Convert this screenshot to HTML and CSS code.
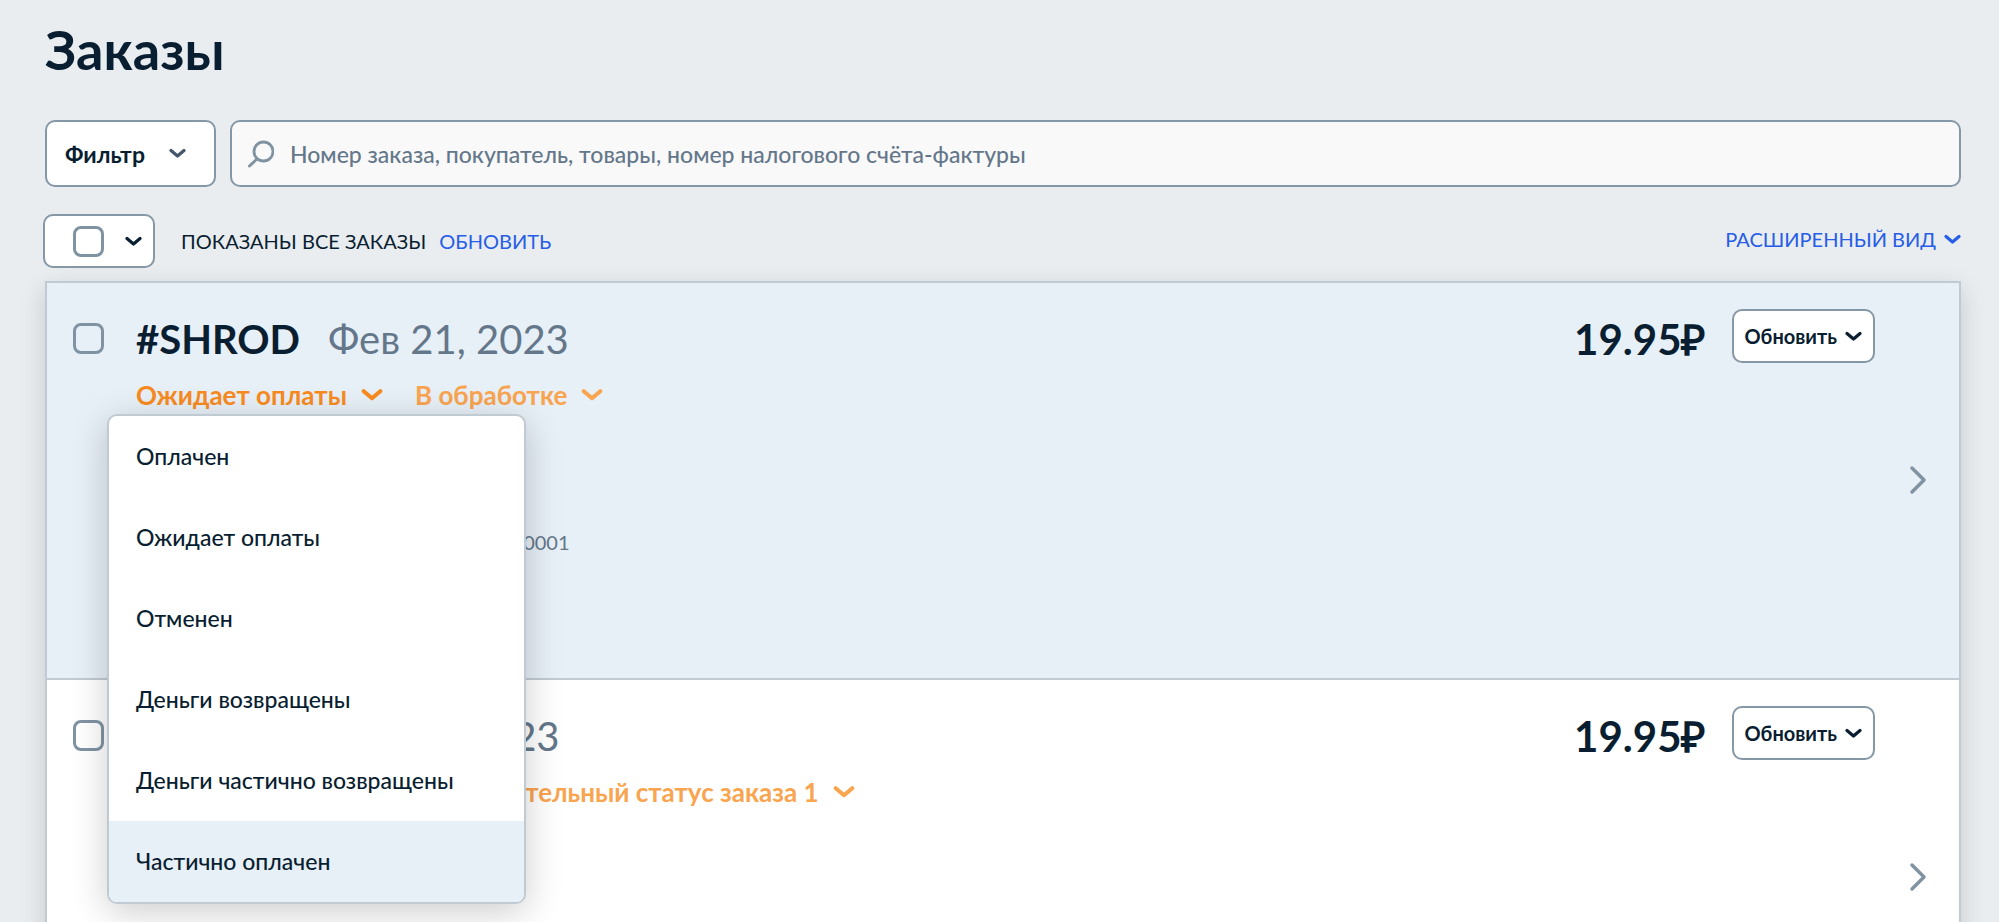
FILE: index.html
```html
<!DOCTYPE html>
<html lang="ru">
<head>
    <meta charset="UTF-8">
    <meta name="viewport" content="width=device-width, initial-scale=1.0">
    <title>Заказы</title>
    <link rel="stylesheet" href="styles.css">
</head>
<body>
    <svg class="sprite" aria-hidden="true">
        <symbol id="chevron" viewBox="0 0 17 11">
            <path d="M2 2.500l6.500 5.500L15 2.500" fill="none" stroke="currentColor" stroke-width="3.200" stroke-linecap="round" stroke-linejoin="round"/>
        </symbol>
        <symbol id="arrow" viewBox="0 0 18 30">
            <path d="M3 3l12 12L3 27" fill="none" stroke="currentColor" stroke-width="3.500" stroke-linecap="round" stroke-linejoin="round"/>
        </symbol>
    </svg>

    <main class="page">
        <h1 class="title">Заказы</h1>

        <form class="search">
            <button type="button" class="btn filter">Фильтр <svg class="chevron"><use href="#chevron"/></svg></button>
            <label class="search-box">
                <svg class="loupe" viewBox="0 0 26 28" aria-hidden="true">
                    <circle cx="15.500" cy="11.500" r="9.500" fill="none" stroke="currentColor" stroke-width="2.800"/>
                    <path d="M9 19l-7.500 7" fill="none" stroke="currentColor" stroke-width="3" stroke-linecap="round"/>
                </svg>
                <input type="text" class="search-input" aria-label="Поиск" placeholder="Номер заказа, покупатель, товары, номер налогового счёта-фактуры">
            </label>
        </form>

        <div class="toolbar">
            <div class="select-all">
                <input type="checkbox" class="check" aria-label="Выбрать все">
                <button type="button" class="link" aria-label="Выбор заказов"><svg class="chevron"><use href="#chevron"/></svg></button>
            </div>
            <span class="shown">Показаны все заказы</span>
            <a class="refresh" href="#">Обновить</a>
            <button type="button" class="link view">Расширенный вид <svg class="chevron"><use href="#chevron"/></svg></button>
        </div>

        <section class="orders">
            <article class="order active">
                <input type="checkbox" class="check" aria-label="Выбрать заказ">
                <div class="info">
                    <div class="heading">
                        <h2 class="number">#SHROD</h2>
                        <span class="date">Фев 21, 2023</span>
                    </div>
                    <div class="statuses">
                        <div class="dropdown">
                            <button type="button" class="status current">Ожидает оплаты <svg class="chevron"><use href="#chevron"/></svg></button>
                            <ul class="menu">
                                <li><button type="button" class="menu-item">Оплачен</button></li>
                                <li><button type="button" class="menu-item">Ожидает оплаты</button></li>
                                <li><button type="button" class="menu-item">Отменен</button></li>
                                <li><button type="button" class="menu-item">Деньги возвращены</button></li>
                                <li><button type="button" class="menu-item">Деньги частично возвращены</button></li>
                                <li><button type="button" class="menu-item hover">Частично оплачен</button></li>
                            </ul>
                        </div>
                        <button type="button" class="status">В обработке <svg class="chevron"><use href="#chevron"/></svg></button>
                    </div>
                    <div class="product">
                        <div class="thumb"></div>
                        <span class="sku">Артикул 00001</span>
                    </div>
                </div>
                <span class="price">19.95₽</span>
                <button type="button" class="btn update">Обновить <svg class="chevron"><use href="#chevron"/></svg></button>
                <a class="open" href="#" aria-label="Открыть заказ"><svg class="arrow"><use href="#arrow"/></svg></a>
            </article>

            <article class="order">
                <input type="checkbox" class="check" aria-label="Выбрать заказ">
                <div class="info">
                    <div class="heading">
                        <h2 class="number">#KBNTE</h2>
                        <span class="date">Фев 21, 2023</span>
                    </div>
                    <div class="statuses">
                        <button type="button" class="status current">Ожидает оплаты <svg class="chevron"><use href="#chevron"/></svg></button>
                        <button type="button" class="status">Дополнительный статус заказа 1 <svg class="chevron"><use href="#chevron"/></svg></button>
                    </div>
                </div>
                <span class="price">19.95₽</span>
                <button type="button" class="btn update">Обновить <svg class="chevron"><use href="#chevron"/></svg></button>
                <a class="open" href="#" aria-label="Открыть заказ"><svg class="arrow"><use href="#arrow"/></svg></a>
            </article>
        </section>
    </main>
</body>
</html>
```

FILE: styles.css
```css
* { box-sizing: border-box; }
body { margin: 0; background: #e9edf0; color: #091e30; font-family: Lato, sans-serif; font-size: 23px; }
button, input { font: inherit; color: inherit; }
button { cursor: pointer; }
a { color: #275de7; text-decoration: none; }

.sprite { position: absolute; width: 0; height: 0; }
.chevron { width: 17px; height: 11px; flex: none; }
.page { padding: 16px 38px 0 45px; }
.title { margin: 0; font-size: 54px; line-height: 68px; font-weight: 700; }

.btn { display: flex; align-items: center; background: #fff; border: 2px solid #8697a6; border-radius: 10px; font-weight: 700; }

/* search */
.search { display: flex; gap: 14px; margin-top: 36px; height: 67px; }
.filter { gap: 24px; width: 171px; padding: 0 18px; }
.filter .chevron { color: #44566a; }
.search-box { display: flex; align-items: center; flex: 1; gap: 16px; padding: 0 16px; background: #f9f9f9; border: 2px solid #8697a6; border-radius: 10px; }
.loupe { width: 26px; height: 28px; color: #8093a3; }
.search-input { flex: 1; padding: 0; border: none; outline: none; background: none; font-weight: 500; }
.search-input::placeholder { color: #64778a; opacity: 1; }

/* toolbar */
.toolbar { display: flex; align-items: center; margin: 27px 0 13px -2px; font-size: 20px; text-transform: uppercase; }
.select-all { display: flex; align-items: center; gap: 21px; width: 112px; height: 54px; padding-left: 28px; background: #fff; border: 2px solid #8697a6; border-radius: 10px; }
.shown { margin-left: 26px; }
.refresh { margin-left: 13px; }
.link { display: flex; align-items: center; gap: 8px; padding: 0; background: none; border: none; text-transform: inherit; }
.view { margin-left: auto; padding-bottom: 4px; color: #275de7; }

.check { appearance: none; flex: none; width: 31px; height: 31px; margin: 0; background: #fff; border: 3px solid #8093a3; border-radius: 8px; }

/* orders */
.orders { border: 2px solid #c0cad2; box-shadow: 0 8px 24px rgba(0, 0, 0, 0.15); }
.order { display: flex; align-items: flex-start; min-height: 397px; padding: 26px 32px 0 26px; background: #fff; border-bottom: 2px solid #c0cad2; }
.order.active { background: #e7eff7; }
.order .check { margin-top: 14px; background: none; }
.info { flex: 1; margin-left: 32px; }
.heading { display: flex; gap: 28px; font-size: 40px; line-height: 60px; }
.number { margin: 0; font-size: 40px; font-weight: 700; }
.date { color: #64778a; }
.statuses { display: flex; gap: 32px; }
.status { display: flex; align-items: center; gap: 14px; padding: 0; background: none; border: none; color: #f9a44f; font-size: 26px; line-height: 52px; font-weight: 700; }
.status.current { color: #f78b1f; }
.status .chevron { width: 22px; height: 14px; }

.product { display: flex; align-items: center; gap: 20px; height: 242px; color: #64778a; font-size: 20px; }
.thumb { width: 273px; }

.price { font-size: 42px; line-height: 60px; font-weight: 700; }
.update { gap: 8px; height: 54px; margin-left: 26px; padding: 0 11px; font-size: 20px; }
.open { align-self: center; margin: 0 0 28px 34px; color: #8093a3; }
.arrow { display: block; width: 18px; height: 30px; }

/* status menu */
.dropdown { position: relative; }
.menu { position: absolute; top: 45px; left: -29px; z-index: 1; width: 419px; margin: 0; padding: 0; list-style: none; overflow: hidden; background: #fff; border: 2px solid #c0cad2; border-radius: 10px; box-shadow: 0 8px 36px rgba(0, 0, 0, 0.2); }
.menu-item { display: block; width: 100%; height: 81px; padding: 0 27px 2px; background: none; border: none; font-weight: 500; text-align: left; }
.menu-item.hover, .menu-item:hover { background: #e7eff7; }
```
